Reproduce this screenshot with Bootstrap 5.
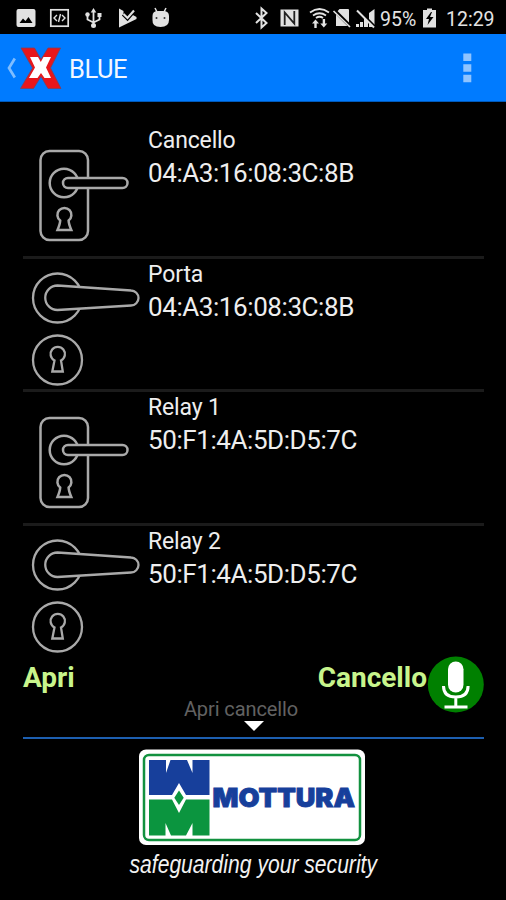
<!DOCTYPE html>
<html lang="it">
<head>
<meta charset="utf-8">
<meta name="viewport" content="width=device-width, initial-scale=1">
<title>BLUE</title>
<link href="https://cdn.jsdelivr.net/npm/bootstrap@5.3.0/dist/css/bootstrap.min.css" rel="stylesheet">
<style>
body{background:#000;color:#eee;font-family:Roboto,"Liberation Sans",sans-serif;height:900px;overflow:hidden}
svg{display:block;flex:none}
.statusbar{height:34px;color:#e4e4e4}
.clock-text{font-size:19.5px;line-height:32px}
.battery-level{width:43px}
.appbar{height:68px;background:#007bff;border-bottom:1px solid #0059ba}
.app-title{font-size:25.5px;line-height:70px;letter-spacing:-.5px;color:#f2f7ff}
.device-list{padding:23px 22px 0 23px;height:553px;overflow:hidden}
.device{height:133.6px;border-bottom:3px solid #1b1b1b}
.device:last-child{border-bottom:0}
.device-name{font-size:23px;line-height:32px;letter-spacing:-.15px}
.device-mac{font-size:26px;line-height:32px;letter-spacing:-.42px}
.voice{height:84px;padding:0 22px 0 23px}
.voice-line{border-bottom:2px solid #1d5fb0;height:84px}
.command{height:42px;font-size:28px;line-height:46px;font-weight:700;color:#c8f58c}
.hint{font-size:20px;line-height:24px;letter-spacing:-.1px;color:#626262;padding-right:25px}
</style>
</head>
<body>
<svg width="0" height="0" class="position-absolute">
 <defs>
  <g id="plate" fill="#000" stroke="#a9a9a9" stroke-width="2.5">
   <rect x="17.5" y="26" width="47.5" height="89" rx="9"/>
   <circle cx="41" cy="58" r="14.3"/>
   <rect x="40" y="53" width="64.5" height="10" rx="5"/>
   <path d="M37.200 95.500a7 7 0 1 1 8.400 0q0 3 2.700 9.500h-13.800q2.700-6.500 2.700-9.500z"/>
  </g>
  <g id="lever" fill="#000" stroke="#a9a9a9" stroke-width="2.300">
   <circle cx="34.500" cy="39" r="24.500"/>
   <path d="M34.500 26.500L108 31.500a7.500 7.500 0 0 1 0 15L34.500 51a12.250 12.250 0 0 1 0-24.500z"/>
   <circle cx="34.500" cy="101" r="24.500"/>
   <path d="M31.500 101.500a7.200 7.200 0 1 1 6.500 0l1.800 11h-10.500z"/>
  </g>
 </defs>
</svg>

<div class="statusbar d-flex">
 <svg width="380" height="34" viewBox="0 0 380 34" fill="#e2e2e2">
  <path fill-rule="evenodd" d="M18.500 9h15a2 2 0 0 1 2 2v14a2 2 0 0 1-2 2h-15a2 2 0 0 1-2-2V11a2 2 0 0 1 2-2zM19.500 23h13l-4-6-3 4-2.500-2.500z"/>
  <rect x="50.800" y="9.800" width="17.400" height="16.400" fill="none" stroke="#e2e2e2" stroke-width="1.700"/>
  <path d="M57 15l-3 3 3 3M62 15l3 3-3 3M60.500 14l-2 8" fill="none" stroke="#e2e2e2" stroke-width="1.400"/>
  <g fill="none" stroke="#e2e2e2" stroke-width="1.800"><path d="M93.500 11v15M87.500 15v4.500l6 3 6-3V15"/></g>
  <path d="M90.700 12.500L93.500 8l2.800 4.500zM97.500 13h4v4h-4z"/><circle cx="87.500" cy="14.500" r="2.200"/><circle cx="93.500" cy="25.500" r="2.500"/>
  <path d="M119 8.500l4.500 2.500v3l3.500 3 4-3 5.500 3v2L119 27.500z"/><path d="M123.500 14l4 4 6.500-7.500" fill="none" stroke="#000" stroke-width="4.500"/><path d="M123.500 14l4 4 6.500-7.500" fill="none" stroke="#e2e2e2" stroke-width="2.200"/>
  <path d="M152.500 16q0-5 5.500-5h5q6 0 6 5v4q0 7-8.500 7t-8-7z"/><path d="M157 12l-2-4M164 12l2-4" stroke="#e2e2e2" stroke-width="1.500"/><circle cx="156.500" cy="18" r="1" fill="#333"/><circle cx="164.500" cy="18" r="1" fill="#333"/>
  <path d="M256 13l10.500 10-5 4.500V8.500l5 4.500L256 23" fill="none" stroke="#e2e2e2" stroke-width="2"/>
  <path d="M280.500 9.500h18v17h-18z"/><path d="M284.700 25V12.500L294.300 23.500V11" fill="none" stroke="#222" stroke-width="1.800"/>
  <g fill="none" stroke="#e2e2e2" stroke-width="1.800"><path d="M310 12.500q9.500-7 19 0M313 15.500q6.500-4.500 13 0M316 18q3.500-2.500 7 0"/></g>
  <path d="M312 23.500l3.500-4 3.500 4h-2.300V28h-2.400v-4.500zM320.300 23.500h2.400V19h2.400v4.500h2.200l-3.500 4z"/>
  <path d="M339.500 9H348a1 1 0 0 1 1 1v16h-13V13z"/><path d="M334 10l17 17" stroke="#000" stroke-width="3.500"/><path d="M333.500 11l16.500 16" stroke="#e2e2e2" stroke-width="1.700"/>
  <path d="M356 27v-3h3v3zM360 27v-5h3v5zM364 27v-9h4v9zM369 27V13l5.500-4v18z"/><path d="M358 10l17 17" stroke="#000" stroke-width="3"/><path d="M357 10.500l17 17" stroke="#e2e2e2" stroke-width="2"/>
 </svg>
 <span class="clock-text battery-level pt-1">95%</span>
 <svg width="23" height="34" viewBox="423 0 23 34"><path d="M423 10h4V8.500h5V10h4v17.500h-13z" fill="#e2e2e2"/><path d="M431 12l-5 7h3l-1.500 6 6-8h-3.500l2-5z" fill="#000"/></svg>
 <span class="clock-text pt-1">12:29</span>
</div>

<header class="appbar d-flex">
 <svg width="69" height="67" viewBox="0 34 69 67">
  <path d="M14.800 58.500L9 68l5.800 9.500" fill="none" stroke="#7fbdff" stroke-width="2.700"/>
  <path d="M20.500 88.500h13l7.500-12 7 12h13L50.500 68l10-20H48L41 59.500 34.500 48H21l11.500 20z" fill="#e8161b" stroke="#853d55" stroke-width=".8"/>
  <path d="M29 78h8.500l3.500-5 3.500 5H51l-5-10.500L51 57h-7.500l-2.700 5-2.800-5h-8l5 10.500z" fill="#fff"/>
 </svg>
 <h1 class="app-title fw-normal m-0 flex-grow-1">BLUE</h1>
 <svg width="43" height="67" viewBox="463 34 43 67" fill="#8fc4ff"><path d="M463.300 53.500h8v7.500h-8zM463.300 64.300h8v7.500h-8zM463.300 74.800h8v7.500h-8z"/></svg>
</header>

<main class="device-list">
 <div class="device d-flex"><svg width="125" height="130"><use href="#plate"/></svg><div><div class="device-name">Cancello</div><div class="device-mac">04:A3:16:08:3C:8B</div></div></div>
 <div class="device d-flex"><svg width="125" height="130"><use href="#lever"/></svg><div><div class="device-name">Porta</div><div class="device-mac">04:A3:16:08:3C:8B</div></div></div>
 <div class="device d-flex"><svg width="125" height="130"><use href="#plate"/></svg><div><div class="device-name">Relay 1</div><div class="device-mac">50:F1:4A:5D:D5:7C</div></div></div>
 <div class="device d-flex"><svg width="125" height="130"><use href="#lever"/></svg><div><div class="device-name">Relay 2</div><div class="device-mac">50:F1:4A:5D:D5:7C</div></div></div>
</main>

<section class="voice">
 <div class="voice-line">
  <div class="d-flex command"><span class="flex-grow-1">Apri</span><span>Cancello</span>
   <svg width="57" height="60" viewBox="427.500 655 57 60"><circle cx="456.300" cy="684.500" r="28" fill="#008000"/><rect x="448.500" y="661.500" width="15.500" height="31" rx="7.700" fill="#fff"/><path d="M444 686q0 11 12.300 11t12.300-11M456.300 697v9M445 707h23" fill="none" stroke="#fff" stroke-width="3"/></svg>
  </div>
  <div class="hint text-center">Apri cancello</div>
  <svg class="mx-auto" width="20" height="11" viewBox="0 0 20 11"><path d="M0 0h20L10 10z" fill="#fff"/></svg>
 </div>
</section>

<footer>
 <svg width="506" height="161" viewBox="0 739 506 161">
  <rect x="139" y="749.500" width="226" height="95.500" rx="7" fill="#fff"/>
  <rect x="144" y="755" width="216" height="85" rx="5" fill="none" stroke="#12913f" stroke-width="2.500"/>
  <path d="M149 760h17v13l4.500-13h16.500l5.500 13V760h17v35H186L179 783l-7 12h-23z" fill="#173f9b"/>
  <path d="M149 799.500h23l7 13.500 7-13.500h23.500v36h-17V823l-6.500 12.500H171L165.500 823v12.500H149z" fill="#0b953f"/>
  <path d="M179 790.500l4.700 7.200-4.700 7.300-4.700-7.300z" fill="#0b953f"/>
  <text x="212.500" y="806.500" textLength="142.500" lengthAdjust="spacingAndGlyphs" font-family="Inter,sans-serif" font-weight="900" font-size="26" fill="#173f9b" stroke="#173f9b" stroke-width=".9">MOTTURA</text>
  <text x="129.500" y="872.500" textLength="247.500" lengthAdjust="spacingAndGlyphs" font-family="Liberation Sans,sans-serif" font-style="italic" font-size="25" fill="#f2f2f2">safeguarding your security</text>
 </svg>
</footer>
<script src="https://cdn.jsdelivr.net/npm/bootstrap@5.3.0/dist/js/bootstrap.bundle.min.js"></script>
</body>
</html>
